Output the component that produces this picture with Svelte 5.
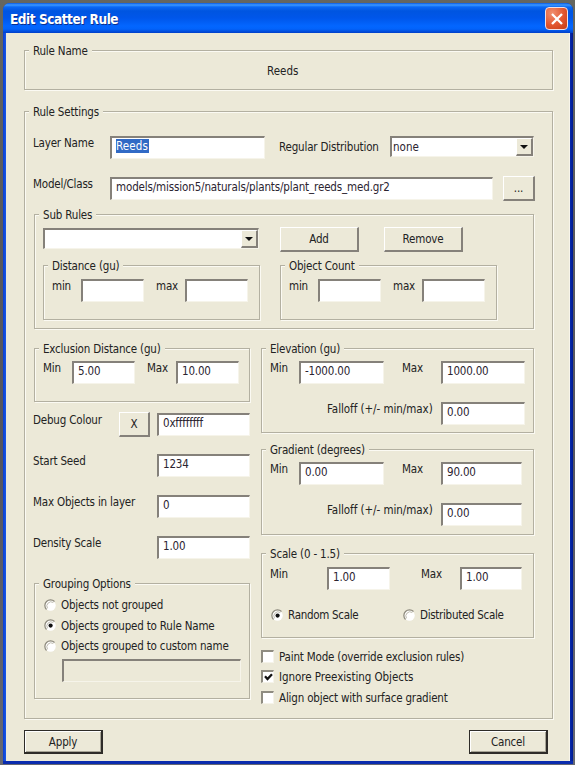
<script>
  let layerName = $state('Reeds');
  let grouping = $state('rule');
  let scaleMode = $state('random');
  let options = $state([
    { text: 'Paint Mode (override exclusion rules)', on: false, cls: 'paint' },
    { text: 'Ignore Preexisting Objects', on: true, cls: 'ignore' },
    { text: 'Align object with surface gradient', on: false, cls: 'align' }
  ]);
  const groupings = [
    { id: 'none', text: 'Objects not grouped' },
    { id: 'rule', text: 'Objects grouped to Rule Name' },
    { id: 'custom', text: 'Objects grouped to custom name' }
  ];
</script>

{#snippet radio(on)}
  <svg class="radio" width="13" height="13" viewBox="0 0 13 13">
    <circle cx="6.5" cy="6.5" r="5.2" fill="#fff" />
    <path d="M2.5 10.5A5.6 5.6 0 0 1 10.5 2.5" fill="none" stroke="#8c897d" stroke-width="1.2" />
    <path d="M3.5 9.3A4.2 4.2 0 0 1 9.3 3.5" fill="none" stroke="#b5b2a5" stroke-width=".9" />
    {#if on}<circle cx="6.6" cy="6.6" r="2.1" fill="#111" />{/if}
  </svg>
{/snippet}

{#snippet arrow()}
  <span class="drop"><svg width="8" height="4" viewBox="0 0 8 4"><path d="M0 0H8L4 4Z" fill="#111" /></svg></span>
{/snippet}

<div class="desktop">
  <div class="window">
    <header>
      <h1>Edit Scatter Rule</h1>
      <button class="close" aria-label="Close">
        <svg width="12" height="12" viewBox="0 0 12 12"><path d="M1 1L11 11M11 1L1 11" stroke="#fff" stroke-width="2.3" /></svg>
      </button>
    </header>

    <main>
      <section class="group name">
        <div class="legend">Rule Name</div>
        <div class="rule">Reeds</div>
      </section>

      <section class="group settings">
        <div class="legend">Rule Settings</div>

        <div class="row layer">
          <span>Layer Name</span>
          <div class="field"><mark>{layerName}</mark></div>
          <span class="dist">Regular Distribution</span>
          <div class="field combo"><span class="none">none</span>{@render arrow()}</div>
        </div>

        <div class="row model">
          <span>Model/Class</span>
          <div class="field"><span class="path">models/mission5/naturals/plants/plant_reeds_med.gr2</span></div>
          <button class="btn">...</button>
        </div>

        <section class="group sub">
          <div class="legend">Sub Rules</div>
          <div class="row pick">
            <div class="field combo">{@render arrow()}</div>
            <button class="btn">Add</button>
            <button class="btn">Remove</button>
          </div>
          <div class="ranges">
            {#each ['Distance (gu)', 'Object Count'] as title}
              <section class="group range">
                <div class="legend">{title}</div>
                <div class="row pair">
                  <span>min</span><div class="field"></div>
                  <span>max</span><div class="field"></div>
                </div>
              </section>
            {/each}
          </div>
        </section>

        <div class="columns">
          <div class="left">
            <section class="group exclusion">
              <div class="legend">Exclusion Distance (gu)</div>
              <div class="row pair">
                <span>Min</span><div class="field">5.00</div>
                <span>Max</span><div class="field">10.00</div>
              </div>
            </section>
            <div class="row line debug">
              <span>Debug Colour</span>
              <button class="btn">X</button>
              <div class="field">0xffffffff</div>
            </div>
            <div class="row line"><span>Start Seed</span><div class="field">1234</div></div>
            <div class="row line"><span>Max Objects in layer</span><div class="field">0</div></div>
            <div class="row line"><span>Density Scale</span><div class="field">1.00</div></div>

            <section class="group grouping">
              <div class="legend">Grouping Options</div>
              <div class="choices">
                {#each groupings as g}
                  <div class="choice">{@render radio(grouping === g.id)}<span>{g.text}</span></div>
                {/each}
              </div>
              <div class="field disabled"></div>
            </section>
          </div>

          <div class="right">
            <section class="group elevation">
              <div class="legend">Elevation (gu)</div>
              <div class="row wide">
                <span>Min</span><div class="field">-1000.00</div>
                <span>Max</span><div class="field">1000.00</div>
              </div>
              <div class="row fall"><span>Falloff (+/- min/max)</span><div class="field">0.00</div></div>
            </section>

            <section class="group gradient">
              <div class="legend">Gradient (degrees)</div>
              <div class="row wide">
                <span>Min</span><div class="field">0.00</div>
                <span>Max</span><div class="field">90.00</div>
              </div>
              <div class="row fall"><span>Falloff (+/- min/max)</span><div class="field">0.00</div></div>
            </section>

            <section class="group scale">
              <div class="legend">Scale (0 - 1.5)</div>
              <div class="row limits">
                <span>Min</span><div class="field">1.00</div>
                <span>Max</span><div class="field">1.00</div>
              </div>
              <div class="modes">
                <div class="choice">{@render radio(scaleMode === 'random')}<span>Random Scale</span></div>
                <div class="choice">{@render radio(scaleMode === 'distributed')}<span>Distributed Scale</span></div>
              </div>
            </section>

            <div class="checks">
              {#each options as o}
                <div class="check">
                  <span class="box">
                    {#if o.on}<svg width="9" height="9" viewBox="0 0 9 9"><path d="M1 3.2L3.5 6L8 1.2" fill="none" stroke="#111" stroke-width="2.3" /></svg>{/if}
                  </span>
                  <span class={['caption', o.cls]}>{o.text}</span>
                </div>
              {/each}
            </div>
          </div>
        </div>
      </section>

      <footer>
        <button class="btn strong">Apply</button>
        <button class="btn strong">Cancel</button>
      </footer>
    </main>
  </div>
</div>

<style>
  :global(body) { margin: 0; }
  * { box-sizing: border-box; }
  .desktop {
    width: 575px; height: 765px; padding: 3px 2px 1px 3px; overflow: hidden;
    background: linear-gradient(#65665f, #59595d 30%, #55555f 60%, #666872);
    font: 11.5px/14px "DejaVu Sans Condensed", "DejaVu Sans", sans-serif;
    font-stretch: condensed; letter-spacing: -.18px;
    color: #222; white-space: nowrap;
  }
  .window {
    height: 761px; display: flex; flex-direction: column;
    padding: 0 3px 3px; border-radius: 7px 7px 0 0;
    background: linear-gradient(90deg, #0a3ed0, #1858e8 3px, #0a30b8 566px, #001a90);
    box-shadow: inset 0 -3px #0a2cae;
  }
  header {
    height: 30px; margin: 0 -3px; padding: 0 5px 0 7px; flex: none;
    display: flex; align-items: center; justify-content: space-between;
    border-radius: 7px 7px 0 0;
    background: linear-gradient(#0a5be0, #3c98ff 2px, #0a68f4 4px, #0055e0 8px, #0056ea 15px, #0366ff 23px, #0263fb 26px, #003fc8 30px);
  }
  h1 {
    margin: 2px 0 0; color: #fff; font: bold 13.5px/16px "DejaVu Sans Condensed", sans-serif;
    font-stretch: condensed; letter-spacing: -.45px; text-shadow: 1px 1px #0a2f90;
  }
  .close {
    width: 23px; height: 23px; padding: 0; margin-top: 1px; display: grid; place-items: center;
    border: 1.5px solid #f0dfe4; border-radius: 4px;
    background: radial-gradient(circle at 30% 25%, #f09070, #e2552f 55%, #c43c14);
  }
  main { flex: 1; background: #ece9d8; padding: 17px 18px 0; border-right: 1px solid #f8f5ea; }
  .group {
    border: 1px solid #b3b0a1; box-shadow: 1px 1px #fbfaf3, inset 1px 1px #fbfaf3;
    display: flex; flex-direction: column;
  }
  .legend {
    align-self: flex-start; height: 14px; margin: -7px 0 -7px 4px; padding: 0 4px;
    background: #ece9d8;
  }
  .name { width: 529px; height: 40px; }
  .rule { margin-top: 13px; padding-left: 242px; letter-spacing: 0; }
  .settings { width: 529px; height: 608px; margin-top: 21px; }
  .row { display: grid; align-items: start; flex: none; }
  .field {
    height: 23px; padding: 1px 0 0 4px; background: #fff; color: #2b2430;
    border: solid; border-width: 2px 1px 1px 2px; border-color: #85817a #f6f4ea #f6f4ea #85817a;
  }
  mark { display: inline-block; background: #316ac5; color: #fff; letter-spacing: .1px; padding-right: 1px; }
  .path { letter-spacing: -.14px; }
  .btn {
    height: 25px; padding: 0; font: inherit; letter-spacing: inherit; color: #222; background: #ece9d8;
    border: solid; border-width: 1px 2px 2px 1px; border-color: #fff #85817a #85817a #fff;
  }
  .layer { margin: 24px 0 0 8px; height: 23px; grid-template-columns: 77px 155px 14px 111px 144px; }
  .layer .dist { grid-column: 4; padding-top: 4px; }
  .combo { display: flex; justify-content: space-between; height: 21px; padding: 0; border-right-width: 1px; }
  .combo > .none { padding: 2px 0 0 1px; letter-spacing: 0; }
  .drop {
    width: 17px; margin-left: auto; display: grid; place-items: center; background: #ece9d8;
    border: solid; border-width: 1px 2px 2px 1px; border-color: #fff #85817a #85817a #fff;
  }
  .model { margin: 17px 0 0 8px; height: 25px; grid-template-columns: 77px 383px 32px; justify-content: start; }
  .model .field { margin-top: 1px; }
  .model > span { padding-top: 1px; }
  .model .btn { margin-left: 10px; width: 32px; }
  .sub { width: 500px; height: 115px; margin: 13px 0 0 9px; }
  .pick { margin: 12px 0 0 8px; grid-template-columns: 216px 79px 79px; column-gap: 21px; height: 25px; }
  .pick .btn:last-child { margin-left: 4px; width: 79px; }
  .pick .combo { margin-top: 1px; }
  .ranges { display: flex; gap: 20px; margin: 13px 0 0 8px; }
  .range { width: 217px; height: 55px; }
  .pair { grid-template-columns: 29px 63px 12px 29px 63px; margin: 13px 0 0 8px; }
  .pair span:nth-of-type(2) { grid-column: 4; }
  .columns { display: flex; gap: 11px; margin: 19px 0 0 9px; }
  .left { width: 216px; }
  .exclusion { height: 54px; }
  .exclusion .pair { margin-top: 12px; }
  .line { grid-template-columns: 124px 93px; margin: 18px 0 0 -1px; }
  .debug { grid-template-columns: 86px 30px 8px 93px; margin-top: 10px; height: 25px; }
  .debug + .line { margin-top: 17px; }
  .debug .field { grid-column: 4; margin-top: 1px; }
  .debug .btn { width: 31px; }
  .debug > span { padding-top: 1px; }
  .grouping { height: 116px; margin-top: 24px; }
  .choices { margin: 13px 0 0 9px; }
  .choice { display: flex; align-items: center; gap: 4px; height: 20.5px; }
  .choices .choice:first-child { margin-top: -2px; }
  .radio { flex: none; }
  .disabled { width: 179px; margin: 2px 0 0 27px; background: #ece9d8; }
  .right { width: 273px; }
  .elevation { height: 85px; }
  .wide { grid-template-columns: 29px 85px 18px 39px 84px; margin: 12px 0 0 8px; }
  .wide span:nth-of-type(2) { grid-column: 4; }
  .fall { grid-template-columns: 114px 84px; margin: 18px 0 0 65px; }
  .fall span { letter-spacing: -.05px; }
  .gradient { height: 86px; margin-top: 16px; }
  .gradient .wide { grid-template-columns: 29px 85px 18px 39px 81px; }
  .gradient .fall { grid-template-columns: 114px 81px; }
  .scale { height: 85px; margin-top: 18px; }
  .limits { grid-template-columns: 57px 63px 31px 39px 62px; margin: 13px 0 0 8px; }
  .limits span:nth-of-type(2) { grid-column: 4; }
  .modes { display: grid; grid-template-columns: 132px 120px; margin: 15px 0 0 9px; letter-spacing: -.3px; }
  .checks { margin-top: 8px; }
  .check { display: flex; align-items: center; gap: 5px; height: 20.5px; }
  .caption { padding-top: 1px; }
  .ignore { letter-spacing: -.05px; }
  .box {
    width: 13px; height: 13px; display: grid; place-items: center; background: #fff;
    border: solid; border-width: 2px 1px 1px 2px; border-color: #8f8c81 #f6f4ea #f6f4ea #8f8c81;
  }
  footer { display: flex; justify-content: space-between; padding: 11px 22px 0 0; width: 546px; }
  .strong { width: 79px; height: 24px; border: 1px solid #2e2c28; border-width: 1px 2px 2px 1px; box-shadow: inset 1px 1px #fff, inset -1px -1px #a8a596; }
</style>
